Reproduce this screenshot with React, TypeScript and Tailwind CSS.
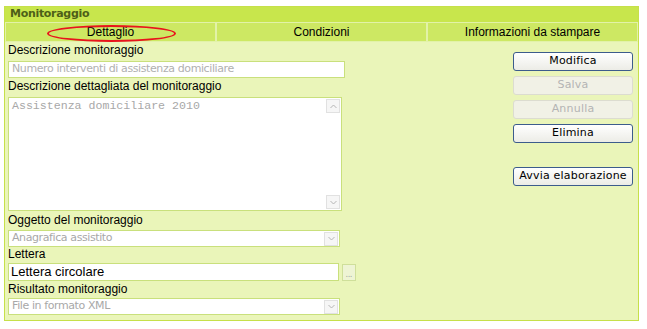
import React from "react"

const labelCls = "text-[12px] leading-[14px] text-black [font-family:Arial,'Liberation_Sans',sans-serif]"
const fieldBorder = "border border-[#c9e07c]"

function Chevron() {
  return (
    <div className="flex h-[14px] w-[14px] items-center justify-center border border-[#e1e1e1] bg-[#f6f6f6]">
      <svg width="7" height="5" viewBox="0 0 7 5">
        <path d="M0.5 1 L3.5 4 L6.5 1" fill="none" stroke="#b5b5b5" strokeWidth="1" />
      </svg>
    </div>
  )
}

function ChevronUp() {
  return (
    <div className="flex h-[14px] w-[14px] items-center justify-center border border-[#e1e1e1] bg-[#f6f6f6]">
      <svg width="7" height="5" viewBox="0 0 7 5">
        <path d="M0.5 4 L3.5 1 L6.5 4" fill="none" stroke="#b5b5b5" strokeWidth="1" />
      </svg>
    </div>
  )
}

function Select({ value }: { value: string }) {
  return (
    <div className={`flex h-[17px] w-[332px] items-center justify-between bg-white pl-[3px] pr-[1px] ${fieldBorder}`}>
      <span className="text-[11px] text-[#a8a8a8] [font-family:'DejaVu_Sans',Verdana,sans-serif] tracking-[-0.4px]">{value}</span>
      <Chevron />
    </div>
  )
}

function Btn({ label, disabled, className = "" }: { label: string; disabled?: boolean; className?: string }) {
  return (
    <div
      className={`flex h-[19px] w-[120px] items-center justify-center rounded-[3px] text-[11px] tracking-[0.2px] [font-family:'DejaVu_Sans',Verdana,sans-serif] ${
        disabled
          ? "border border-[#dcdcd0] bg-[#f1f1e6] text-[#b4b4b4]"
          : "border border-[#3c5c8c] bg-gradient-to-b from-white to-[#ecece6] text-black"
      } ${className}`}
    >
      {label}
    </div>
  )
}

export default function App() {
  return (
    <div className="h-[329px] w-[647px] bg-white pl-[4px] pt-[6px]">
      <div className="flex h-[315px] w-[635px] flex-col border border-[#c6e04a] bg-[#eaf5b9]">
        <div className="flex h-[15px] items-center bg-[#c8e64c] pl-[5px] text-[11px] font-bold text-[#4e5f18] [font-family:'DejaVu_Sans',Verdana,sans-serif] tracking-[-0.3px]">
          Monitoraggio
        </div>
        <div className="grid h-[19px] grid-cols-3 bg-[#cde863]">
          {["Dettaglio", "Condizioni", "Informazioni da stampare"].map((t) => (
            <div
              key={t}
              className="relative flex items-center justify-center border border-[#e2f2a8] text-[12px] text-black [font-family:Arial,'Liberation_Sans',sans-serif]"
            >
              {t}
              {t === "Dettaglio" && (
                <div className="absolute left-[41px] top-[2px] h-[17px] w-[129px] rounded-[50%] border-2 border-[#e8141c]" />
              )}
            </div>
          ))}
        </div>
        <div className="flex flex-1 pl-[3px]">
          <div className="flex w-[352px] flex-col pt-[2px]">
            <div className={labelCls}>Descrizione monitoraggio</div>
            <div className={`mt-[4px] flex h-[17px] w-[337px] items-center bg-white pl-[3px] ${fieldBorder}`}>
              <span className="text-[11px] text-[#b0b0b0] [font-family:'DejaVu_Sans',Verdana,sans-serif] tracking-[-0.4px]">
                Numero interventi di assistenza domiciliare
              </span>
            </div>
            <div className={`${labelCls} mt-[1px]`}>Descrizione dettagliata del monitoraggio</div>
            <div className={`mt-[4px] flex h-[114px] w-[334px] justify-between bg-white pl-[3px] pr-[1px] pt-[1px] ${fieldBorder}`}>
              <span className="text-[11.6px] leading-[14px] text-[#a8a8a8] [font-family:'Liberation_Mono','Courier_New',monospace]">
                Assistenza domiciliare 2010
              </span>
              <div className="flex flex-col justify-between pb-[1px]">
                <ChevronUp />
                <Chevron />
              </div>
            </div>
            <div className={`${labelCls} mt-[2px]`}>Oggetto del monitoraggio</div>
            <div className="mt-[3px]">
              <Select value="Anagrafica assistito" />
            </div>
            <div className={labelCls}>Lettera</div>
            <div className="mt-[2px] flex items-center gap-[3px]">
              <div className={`flex h-[18px] w-[331px] items-center bg-white pl-[2px] ${fieldBorder}`}>
                <span className="text-[13px] text-black [font-family:Arial,'Liberation_Sans',sans-serif]">Lettera circolare</span>
              </div>
              <div className="flex h-[17px] w-[14px] items-end justify-center border border-[#cfdf9a] bg-[#eef4d4] pb-[2px] text-[8px] leading-[8px] text-[#999]">
                ...
              </div>
            </div>
            <div className={`${labelCls} mt-[1px]`}>Risultato monitoraggio</div>
            <div className="mt-[2px]">
              <Select value="File in formato XML" />
            </div>
          </div>
          <div className="ml-[153px] flex flex-col gap-[5px] pt-[11px]">
            <Btn label="Modifica" />
            <Btn label="Salva" disabled />
            <Btn label="Annulla" disabled />
            <Btn label="Elimina" />
            <Btn label="Avvia elaborazione" className="mt-[19px]" />
          </div>
        </div>
      </div>
    </div>
  )
}
